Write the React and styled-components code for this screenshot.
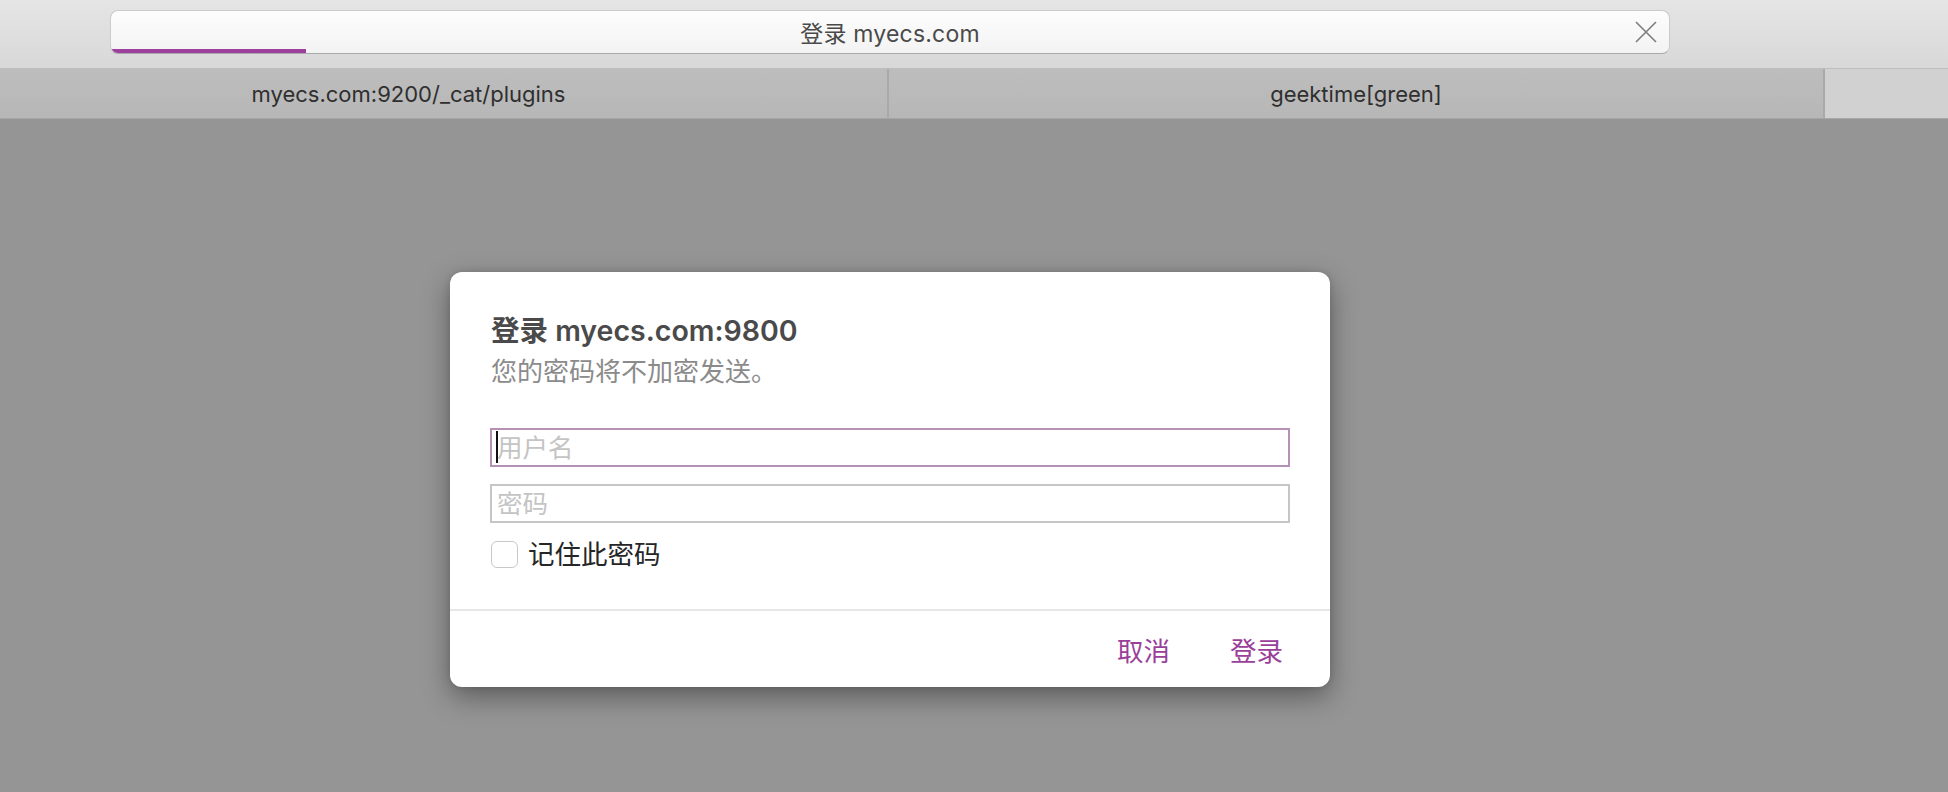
import React from "react";
import styled, { createGlobalStyle } from "styled-components";

const Global = createGlobalStyle`
  html, body { margin: 0; padding: 0; }
  body {
    background: #959595;
    font-family: Inter, "Liberation Sans", "Noto Sans CJK SC", sans-serif;
    overflow: hidden;
  }
`;

const Page = styled.div`
  width: 1948px;
  height: 792px;
  display: flex;
  flex-direction: column;
  background: #959595;
`;

const TopBar = styled.div`
  height: 69px;
  box-sizing: border-box;
  padding: 10px 0 0 110px;
  background: linear-gradient(#e5e5e5, #d8d8d8);
  border-bottom: 1px solid #bdbdbd;
`;

const AddressField = styled.div`
  position: relative;
  width: 1560px;
  height: 44px;
  box-sizing: border-box;
  border: 1px solid #cbcbcb;
  border-bottom-color: #a9a9a9;
  border-radius: 8px;
  background: linear-gradient(#fdfdfd, #f3f3f3);
  display: flex;
  align-items: center;
  justify-content: center;
  overflow: hidden;
`;

const AddressTitle = styled.span`
  font-size: 23px;
  color: #4a4a4a;
  letter-spacing: 0.2px;
  margin-top: -1px;
`;

const Progress = styled.div`
  position: absolute;
  left: 0;
  bottom: 0;
  height: 4px;
  background: #9d3f9d;
`;

const CloseButton = styled.div`
  position: absolute;
  right: 12px;
  top: 10px;
  width: 22px;
  height: 22px;
  display: flex;
`;

const TabBar = styled.div`
  height: 50px;
  box-sizing: border-box;
  display: grid;
  grid-template-columns: 889px 936px 1fr;
  background: #bababa;
  border-bottom: 1px solid #a6a6a6;
`;

const Tab = styled.div`
  display: flex;
  align-items: center;
  justify-content: center;
  padding-right: ${(p) => p.$shift || 0}px;
  font-size: 22px;
  color: #2f2f2f;
  border-right: 2px solid #a9a9a9;
  background: linear-gradient(#bdbdbd, #b7b7b7);
`;

const NewTabArea = styled.div`
  background: #d1d1d1;
`;

const Stage = styled.div`
  flex: 1;
  padding: 153px 0 0 450px;
`;

const Dialog = styled.div`
  width: 880px;
  background: #fff;
  border-radius: 12px;
  box-shadow: 0 10px 28px rgba(0, 0, 0, 0.38), 0 0 6px rgba(0, 0, 0, 0.12);
  display: flex;
  flex-direction: column;
`;

const Body = styled.div`
  padding: 41px 40px 41px 40px;
  display: flex;
  flex-direction: column;
`;

const Title = styled.div`
  font-size: 28.5px;
  font-weight: 600;
  color: #4a4a4a;
  line-height: 36px;
  padding-left: 1px;
`;

const Subtitle = styled.div`
  font-size: 26px;
  color: #8b8b8b;
  line-height: 34px;
  padding-left: 1px;
  margin: 6px 0 39px;
`;

const FieldWrap = styled.div`
  position: relative;
  margin-bottom: ${(p) => p.$gap || 0}px;
`;

const Field = styled.input`
  display: block;
  width: 800px;
  height: 39px;
  box-sizing: border-box;
  border: 2px solid ${(p) => (p.$focused ? "#b592b5" : "#c6c6c6")};
  border-radius: 0;
  outline: none;
  padding: 0 0 0 5px;
  font-family: inherit;
  font-size: 25.5px;
  color: #222;
  background: #fff;
  &::placeholder {
    color: #c4c4c4;
  }
`;

const Caret = styled.span`
  position: absolute;
  left: 6px;
  top: 3px;
  width: 2px;
  height: 32px;
  background: #111;
`;

const CheckRow = styled.label`
  display: flex;
  align-items: center;
  gap: 10px;
  height: 28px;
  padding-left: 1px;
  font-size: 26.5px;
  line-height: 28px;
  color: #262626;
`;

const Box = styled.span`
  width: 27px;
  height: 27px;
  box-sizing: border-box;
  border: 1.5px solid #c9c9c9;
  border-radius: 6px;
  background: #fff;
`;

const Footer = styled.div`
  border-top: 2px solid #e6e6e6;
  height: 78px;
  box-sizing: border-box;
  display: flex;
  align-items: center;
  justify-content: flex-end;
  gap: 60px;
  padding: 0 47px 0 0;
`;

const ActionButton = styled.button`
  border: none;
  background: none;
  padding: 0;
  font-family: inherit;
  font-size: 26.5px;
  color: #9a3f9a;
  cursor: pointer;
`;

export default function App() {
  return (
    <Page>
      <Global />
      <TopBar>
        <AddressField>
          <AddressTitle>登录 myecs.com</AddressTitle>
          <Progress style={{ width: 195 }} />
          <CloseButton>
            <svg width="22" height="22" viewBox="0 0 22 22">
              <path d="M1 1L21 21M21 1L1 21" stroke="#7d7d7d" strokeWidth="1.6" fill="none" />
            </svg>
          </CloseButton>
        </AddressField>
      </TopBar>
      <TabBar>
        <Tab $shift={70}>myecs.com:9200/_cat/plugins</Tab>
        <Tab>geektime[green]</Tab>
        <NewTabArea />
      </TabBar>
      <Stage>
        <Dialog>
          <Body>
            <Title>登录 myecs.com:9800</Title>
            <Subtitle>您的密码将不加密发送。</Subtitle>
            <FieldWrap $gap={17}>
              <Field $focused placeholder="用户名" />
              <Caret />
            </FieldWrap>
            <FieldWrap $gap={17}>
              <Field type="password" placeholder="密码" />
            </FieldWrap>
            <CheckRow>
              <Box />
              记住此密码
            </CheckRow>
          </Body>
          <Footer>
            <ActionButton>取消</ActionButton>
            <ActionButton>登录</ActionButton>
          </Footer>
        </Dialog>
      </Stage>
    </Page>
  );
}
